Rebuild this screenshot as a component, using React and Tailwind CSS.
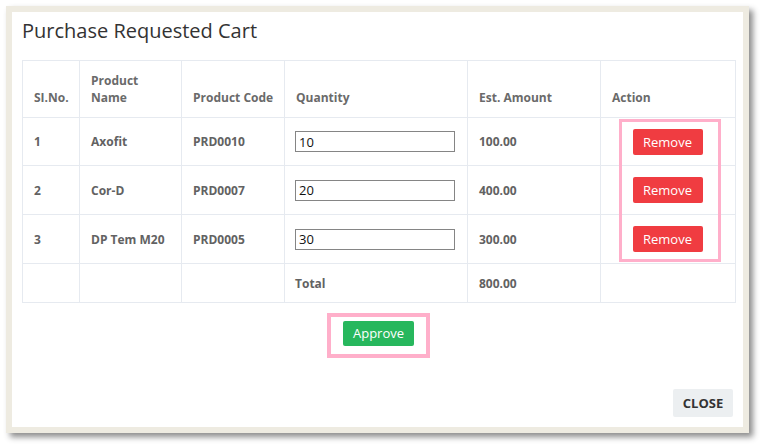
import React from "react";

const rows = [
  { n: "1", name: "Axofit", code: "PRD0010", qty: "10", amt: "100.00" },
  { n: "2", name: "Cor-D", code: "PRD0007", qty: "20", amt: "400.00" },
  { n: "3", name: "DP Tem M20", code: "PRD0005", qty: "30", amt: "300.00" },
];

const heads = ["SI.No.", "Product Name", "Product Code", "Quantity", "Est. Amount", "Action"];

export default function App() {
  return (
    <div
      className="w-[767px] h-[448px] bg-white pl-[6px] pt-[6px]"
      style={{ fontFamily: '"Open Sans", "Noto Sans", sans-serif' }}
    >
      <div className="relative w-[743px] h-[427px] border-[6px] border-[#eeebe1] bg-white shadow-[4px_4px_6px_rgba(0,0,0,0.45)] flex flex-col">
        <h1 className="pl-[10px] pt-[5px] text-[20px] leading-[28px] text-[#333] font-normal">
          Purchase Requested Cart
        </h1>
        <div className="px-[10px] pt-[15px]">
          <table className="w-[713px] border-collapse table-fixed text-[12px] leading-[17px]">
            <colgroup>
              <col className="w-[57px]" />
              <col className="w-[102px]" />
              <col className="w-[103px]" />
              <col className="w-[183px]" />
              <col className="w-[133px]" />
              <col className="w-[135px]" />
            </colgroup>
            <thead>
              <tr className="h-[57px]">
                {heads.map((h, i) => (
                  <th
                    key={i}
                    className="border border-[#e6eaf0] pl-[11px] pr-[10px] pb-[11px] pt-[10px] align-bottom text-left font-bold text-[#6a6a6a] whitespace-nowrap"
                  >
                    {i === 1 ? (
                      <>
                        Product
                        <br />
                        Name
                      </>
                    ) : (
                      h
                    )}
                  </th>
                ))}
              </tr>
            </thead>
            <tbody>
              {rows.map((r, idx) => (
                <tr key={r.n} className={idx === 0 ? "h-[48px]" : "h-[49px]"}>
                  <td className="border border-[#e6eaf0] pl-[11px] align-middle font-bold text-[#626262]">{r.n}</td>
                  <td className="border border-[#e6eaf0] pl-[11px] align-middle font-bold text-[#626262]">{r.name}</td>
                  <td className="border border-[#e6eaf0] pl-[11px] align-middle font-bold text-[#626262]">{r.code}</td>
                  <td className="border border-[#e6eaf0] px-[10px] align-middle">
                    <input
                      readOnly
                      value={r.qty}
                      className="block w-[160px] h-[21px] border border-[#858585] px-[3px] text-[13px] text-[#111] bg-white outline-none"
                    />
                  </td>
                  <td className="border border-[#e6eaf0] pl-[11px] align-middle font-bold text-[#626262]">{r.amt}</td>
                  <td className="border border-[#e6eaf0] px-[12px] align-middle">
                    <div className="flex justify-center pr-[1px]">
                      <button className="w-[70px] h-[26px] rounded-[2px] bg-[#f03c41] text-white text-[13px] leading-[26px] font-normal">
                        Remove
                      </button>
                    </div>
                  </td>
                </tr>
              ))}
              <tr className="h-[39px]">
                <td className="border border-[#e6eaf0]"></td>
                <td className="border border-[#e6eaf0]"></td>
                <td className="border border-[#e6eaf0]"></td>
                <td className="border border-[#e6eaf0] pl-[10px] align-middle font-bold text-[#626262]">Total</td>
                <td className="border border-[#e6eaf0] pl-[11px] align-middle font-bold text-[#626262]">800.00</td>
                <td className="border border-[#e6eaf0]"></td>
              </tr>
            </tbody>
          </table>
        </div>
        <div className="flex justify-center pt-[10px] pl-[2px]">
          <div className="border-[4px] border-[#ffafca] pl-[12px] pr-[12px] pt-[3px] pb-[8px]">
            <button className="w-[71px] h-[25px] rounded-[2px] bg-[#27b75d] text-white text-[13px] leading-[25px]">
              Approve
            </button>
          </div>
        </div>
        <div className="flex-1"></div>
        <div className="flex justify-end pr-[10px] pb-[10px]">
          <button className="w-[60px] h-[28px] rounded-[2px] bg-[#eceff1] text-[#333] text-[13px] font-bold leading-[28px]">
            CLOSE
          </button>
        </div>
        <div className="absolute left-[607px] top-[107px] w-[102px] h-[143px] border-[3px] border-[#ffafca] pointer-events-none"></div>
      </div>
    </div>
  );
}
